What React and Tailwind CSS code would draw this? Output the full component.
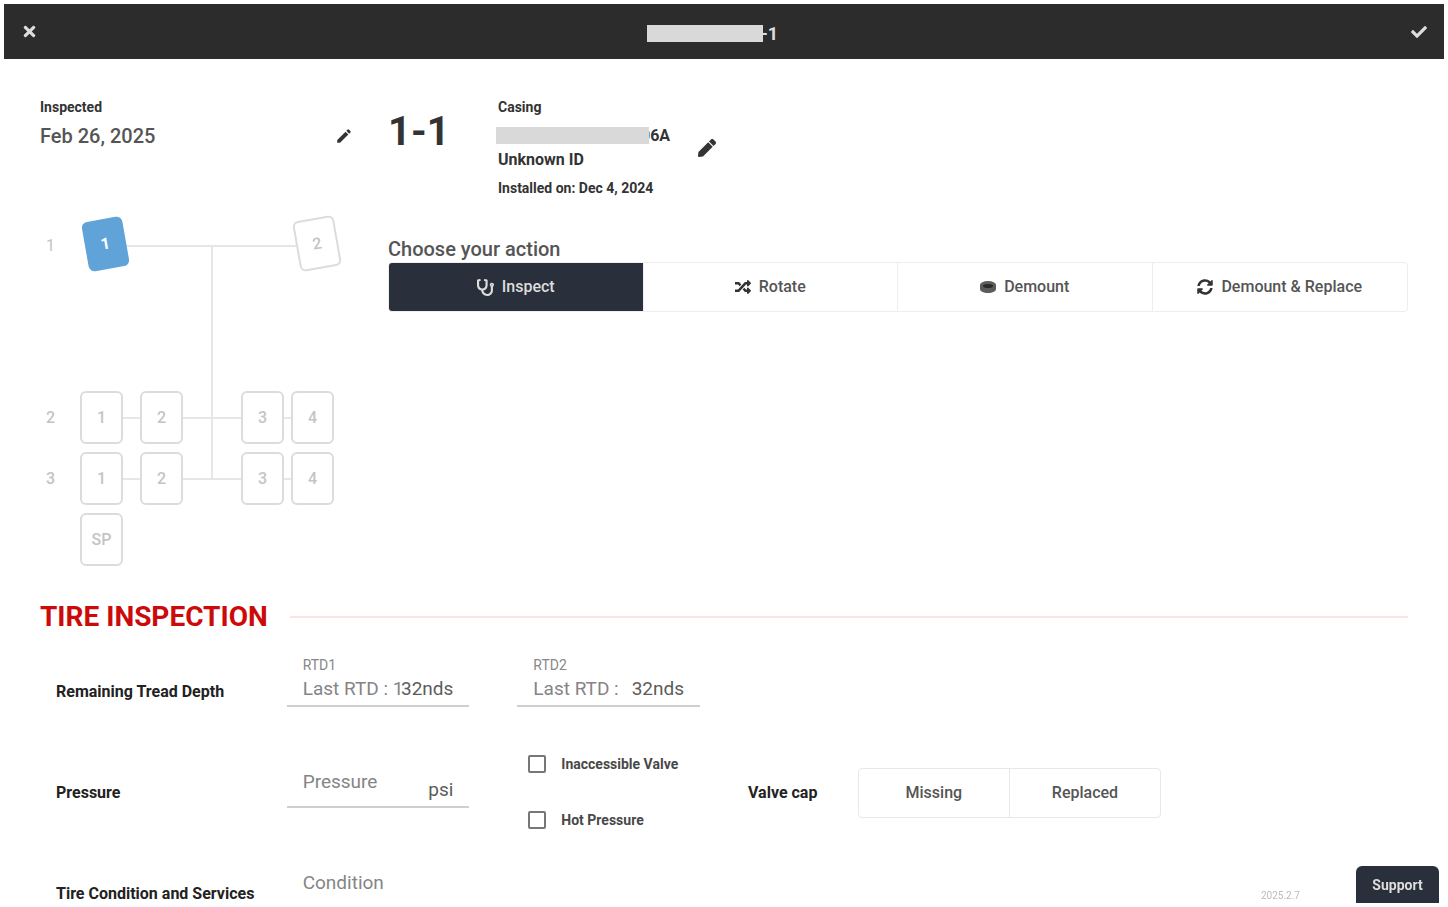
import React, { useState } from 'react';
import { FaTimes, FaCheck, FaStethoscope, FaRandom, FaSyncAlt, FaPen } from 'react-icons/fa';
import { MdEdit } from 'react-icons/md';

const TireIcon = () => (
  <svg width="16" height="14" viewBox="0 0 16 14" aria-hidden="true">
    <path d="M0 5v4c0 2.4 3.6 4 8 4s8-1.6 8-4V5z" fill="#5c5c5c" />
    <ellipse cx="8" cy="5" rx="8" ry="4" fill="#5c5c5c" />
    <ellipse cx="8" cy="6" rx="5" ry="2" fill="#2a2a2a" />
  </svg>
);

const actions = [
  { id: 'inspect', label: 'Inspect', icon: <FaStethoscope size={17} /> },
  { id: 'rotate', label: 'Rotate', icon: <FaRandom size={16} /> },
  { id: 'demount', label: 'Demount', icon: <TireIcon /> },
  { id: 'replace', label: 'Demount & Replace', icon: <FaSyncAlt size={16} /> },
];

const Tire = ({ children }) => (
  <button className="h-[53px] w-[43px] shrink-0 rounded-md border-2 border-[#dcdcdc] bg-white text-base font-medium text-[#c4c4c4]">
    {children}
  </button>
);

const Axle = ({ number }) => (
  <div className="flex items-center">
    <span className="w-10 pl-[6px] text-base font-medium text-[#c4c4c4]">{number}</span>
    <Tire>1</Tire>
    <div className="h-[2px] w-[17px] bg-[#e6e6e6]" />
    <Tire>2</Tire>
    <div className="h-[2px] w-[58px] bg-[#e6e6e6]" />
    <Tire>3</Tire>
    <div className="h-[2px] w-[7px] bg-[#e6e6e6]" />
    <Tire>4</Tire>
  </div>
);

const AxleDiagram = () => (
  <div className="relative mt-[66px] flex flex-col gap-2">
    <div className="absolute left-[171px] top-8 h-[232px] w-[2px] bg-[#e6e6e6]" />
    <div className="mb-[110px] flex h-[59px] items-center">
      <span className="w-[45px] pl-[6px] pt-1 text-base text-[#c4c4c4]">1</span>
      <button className="z-10 h-[50px] w-[41px] -rotate-10 rounded-md bg-[#5fa3d8] text-base font-bold text-white">
        1
      </button>
      <div className="mt-1 h-[2px] w-[170px] bg-[#e6e6e6]" />
      <button className="z-10 h-[51px] w-[42px] -rotate-10 rounded-md border-2 border-[#dcdcdc] bg-white text-base font-medium text-[#c4c4c4]">
        2
      </button>
    </div>
    <Axle number={2} />
    <Axle number={3} />
    <div className="pl-10">
      <Tire>SP</Tire>
    </div>
  </div>
);

const RtdField = ({ id, label, placeholder }) => (
  <div className="relative flex h-14 flex-col justify-end border-b-2 border-[#cfcfcf] px-4">
    <label htmlFor={id} className="text-sm leading-[14px] text-[#888]">{label}</label>
    <input
      id={id}
      placeholder={placeholder}
      className="h-[33px] w-full text-[19px] text-[#444] outline-none placeholder:text-[#858585]"
    />
    <span className="pointer-events-none absolute bottom-0 right-4 text-[19px] leading-[33px] text-[#5c5c5c]">32nds</span>
  </div>
);

const App = () => {
  const [action, setAction] = useState('inspect');
  const [valveCap, setValveCap] = useState(null);
  const [inaccessible, setInaccessible] = useState(false);
  const [hot, setHot] = useState(false);

  return (
    <div className="flex h-screen flex-col bg-white p-1 font-['Roboto',sans-serif] text-[#333]">
      <header className="flex h-[55px] shrink-0 items-center justify-between bg-[#2c2c2c] px-[17px] text-[#ddd]">
        <button aria-label="Close"><FaTimes size={17} /></button>
        <h1 className="flex items-center pr-6 pt-1 text-lg font-bold leading-5">
          <span className="relative -mr-[2px] h-[17px] w-[116px] bg-[#d9d9d9]" />
          -1
        </h1>
        <button aria-label="Save"><FaCheck size={16} /></button>
      </header>

      <main className="grow overflow-y-auto px-9 pt-10 [scrollbar-width:none]">
        <div className="flex items-start">
          <div className="w-[313px] shrink-0">
            <div className="text-sm font-bold leading-4">Inspected</div>
            <div className="flex items-center justify-between pt-[9px] text-xl leading-6 font-medium text-[#555]">
              Feb 26, 2025
              <button aria-label="Edit date" className="text-[#333]"><MdEdit size={18} /></button>
            </div>
            <AxleDiagram />
          </div>

          <div className="ml-[35px] grow">
            <div className="flex h-[97px]">
              <div className="w-[110px] pt-[9px] text-[40px] font-bold leading-[48px]">1-1</div>
              <div className="font-bold">
                <div className="text-sm leading-4">Casing</div>
                <div className="flex items-center pt-3 text-base leading-[17px]">
                  <span className="relative -ml-[2px] -mr-2 h-[17px] w-[153px] bg-[#d9d9d9]" />
                  06A
                </div>
                <div className="pt-2 text-base leading-4">Unknown ID</div>
                <div className="pt-3 text-sm leading-4">Installed on: Dec 4, 2024</div>
              </div>
              <button aria-label="Edit casing" className="ml-7 self-center"><FaPen size={18} /></button>
            </div>

            <h2 className="mt-10 text-xl font-medium leading-[26px] text-[#555]">Choose your action</h2>
            <div className="grid h-[50px] grid-cols-4 overflow-hidden rounded-sm border border-[#eee]">
              {actions.map((a) => (
                <button
                  key={a.id}
                  onClick={() => setAction(a.id)}
                  className={`flex items-center justify-center gap-2 border-r border-[#eee] text-base font-medium last:border-r-0 ${
                    action === a.id ? 'bg-[#29303b] text-[#ddd]' : 'text-[#555]'
                  }`}
                >
                  <span className={action === a.id ? '' : 'text-[#333]'}>{a.icon}</span>
                  {a.label}
                </button>
              ))}
            </div>
          </div>
        </div>

        <div className="mt-[35px] flex items-center gap-[22px]">
          <h2 className="text-[28px] font-bold leading-8 text-[#cc0a0a]">TIRE INSPECTION</h2>
          <div className="h-[2px] grow bg-[#fce4e4]" />
        </div>

        <section className="px-4 pt-[18px]">
          <div className="grid min-h-[101px] grid-cols-6 items-start gap-x-12">
            <div className="whitespace-nowrap pt-8 text-base font-bold leading-[18px] text-[#222]">Remaining Tread Depth</div>
            <RtdField id="rtd1" label="RTD1" placeholder="Last RTD : 1" />
            <RtdField id="rtd2" label="RTD2" placeholder="Last RTD :" />
          </div>

          <div className="grid min-h-[101px] grid-cols-6 items-start gap-x-12">
            <label htmlFor="pressure" className="pt-8 text-base font-bold leading-[18px] text-[#222]">Pressure</label>
            <div className="relative h-14 border-b-2 border-[#cfcfcf] px-4">
              <input
                id="pressure"
                placeholder="Pressure"
                className="h-[58px] w-full text-[19px] text-[#444] outline-none placeholder:text-[#858585]"
              />
              <span className="pointer-events-none absolute bottom-0 right-4 text-[19px] leading-[33px] text-[#5c5c5c]">psi</span>
            </div>
            <div className="flex flex-col gap-8 pl-[11px]">
              <label className="flex h-6 items-center gap-[15px] whitespace-nowrap text-sm font-bold text-[#484848]">
                <input
                  type="checkbox"
                  checked={inaccessible}
                  onChange={(e) => setInaccessible(e.target.checked)}
                  className="size-[18px] shrink-0 appearance-none rounded-xs border-2 border-[#777] checked:bg-[#777]"
                />
                Inaccessible Valve
              </label>
              <label className="flex h-6 items-center gap-[15px] whitespace-nowrap text-sm font-bold text-[#484848]">
                <input
                  type="checkbox"
                  checked={hot}
                  onChange={(e) => setHot(e.target.checked)}
                  className="size-[18px] shrink-0 appearance-none rounded-xs border-2 border-[#777] checked:bg-[#777]"
                />
                Hot Pressure
              </label>
            </div>
            <div className="col-span-2 mt-4 flex h-[50px] items-center">
              <div className="w-[110px] text-base font-bold text-[#222]">Valve cap</div>
              <div className="grid h-full grow grid-cols-2 rounded-sm border border-[#e8e8e8]">
                {['Missing', 'Replaced'].map((v) => (
                  <button
                    key={v}
                    onClick={() => setValveCap(v)}
                    className={`border-r border-[#e8e8e8] text-base font-medium last:border-r-0 ${
                      valveCap === v ? 'bg-[#29303b] text-white' : 'text-[#555]'
                    }`}
                  >
                    {v}
                  </button>
                ))}
              </div>
            </div>
          </div>

          <div className="grid grid-cols-6 items-start gap-x-12">
            <label htmlFor="condition" className="whitespace-nowrap pt-8 text-base font-bold leading-[18px] text-[#222]">
              Tire Condition and Services
            </label>
            <div className="h-14 border-b-2 border-[#cfcfcf] px-4">
              <input
                id="condition"
                placeholder="Condition"
                className="h-[58px] w-full text-[19px] text-[#444] outline-none placeholder:text-[#858585]"
              />
            </div>
          </div>
        </section>
      </main>

      <div className="fixed bottom-1 right-[9px] flex items-end gap-14">
        <span className="text-[10px] leading-[14px] text-[#bbb]">2025.2.7</span>
        <button className="h-[37px] w-[83px] rounded-t-md bg-[#29303b] text-sm font-bold text-[#ddd]">Support</button>
      </div>
    </div>
  );
};

export default App;
